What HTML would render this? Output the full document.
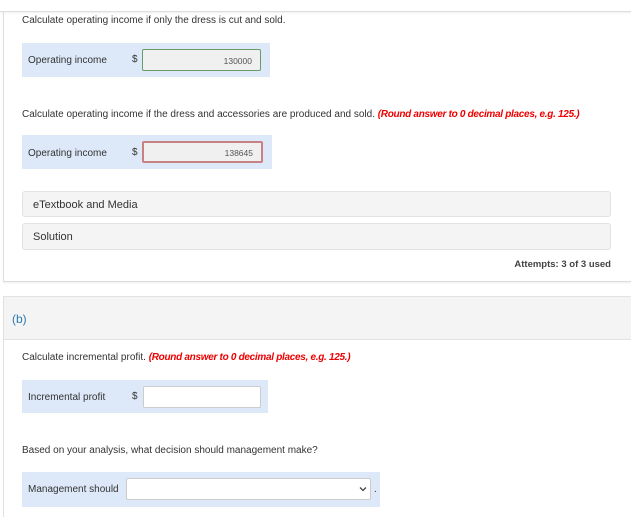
<!DOCTYPE html>
<html><head><style>
body{margin:0;width:631px;height:510px;overflow:hidden;background:#fff;font-family:"Liberation Sans",sans-serif;color:#333;font-size:10px;position:relative}
.a{position:absolute}
.box{position:absolute;background:#dde8f8}
.lbl{position:absolute;font-size:10px;color:#333}
.inp{position:absolute;background:#f0f0f0;border:1px solid #aaa;border-radius:2px;box-sizing:border-box;text-align:right;font-size:8.5px;color:#555;line-height:20px;padding-right:8px}
.red{color:#e00;font-style:italic;font-weight:bold;letter-spacing:-0.3px}
.gr{position:absolute;background:#f4f4f4;border:1px solid #e2e2e2;border-radius:3px;box-sizing:border-box;font-size:11px;padding-left:10px;line-height:26px;color:#333}
</style></head><body>
<div class="a" style="left:0;top:0;width:631px;height:11px;border-bottom:1px solid #ddd;box-shadow:0 1px 2px #eee"></div>
<div class="a" style="left:3px;top:12px;width:640px;height:269px;border-left:1px solid #e0e0e0;border-bottom:1px solid #ddd;box-shadow:0 1px 2px #eee"></div>
<div class="a" style="left:22px;top:15px">Calculate operating income if only the dress is cut and sold.</div>
<div class="box" style="left:22px;top:43px;width:248px;height:34px"></div>
<div class="lbl" style="left:28px;top:55px">Operating income</div>
<div class="lbl" style="left:132px;top:54px">$</div>
<div class="inp" style="left:142px;top:49px;width:119px;height:22px;border:1px solid #6a9a6a;line-height:22px">130000</div>
<div class="a" style="left:22px;top:109px">Calculate operating income if the dress and accessories are produced and sold. <span class="red">(Round answer to 0 decimal places, e.g. 125.)</span></div>
<div class="box" style="left:22px;top:135px;width:250px;height:34px"></div>
<div class="lbl" style="left:28px;top:148px">Operating income</div>
<div class="lbl" style="left:132px;top:147px">$</div>
<div class="inp" style="left:142px;top:141px;width:121px;height:22px;border:2px solid #c98080">138645</div>
<div class="gr" style="left:22px;top:191px;width:589px;height:26px">eTextbook and Media</div>
<div class="gr" style="left:22px;top:223px;width:589px;height:27px">Solution</div>
<div class="a" style="right:20px;top:259px;font-weight:bold;font-size:9.5px;color:#444">Attempts: 3 of 3 used</div>
<div class="a" style="left:3px;top:296px;width:640px;height:220px;border-left:1px solid #e0e0e0;border-top:1px solid #e2e2e2"></div>
<div class="a" style="left:4px;top:297px;width:640px;height:42px;background:#f4f4f4;border-bottom:1px solid #e2e2e2"></div>
<div class="a" style="left:12px;top:312px;font-size:12px;color:#2a7ab0">(b)</div>
<div class="a" style="left:22px;top:352px">Calculate incremental profit. <span class="red">(Round answer to 0 decimal places, e.g. 125.)</span></div>
<div class="box" style="left:22px;top:380px;width:246px;height:33px"></div>
<div class="lbl" style="left:28px;top:392px">Incremental profit</div>
<div class="lbl" style="left:132px;top:391px">$</div>
<div class="inp" style="left:143px;top:386px;width:118px;height:22px;background:#fff;border:1px solid #ccc"></div>
<div class="a" style="left:22px;top:445px">Based on your analysis, what decision should management make?</div>
<div class="box" style="left:22px;top:472px;width:358px;height:35px"></div>
<div class="lbl" style="left:28px;top:484px">Management should</div>
<div class="inp" style="left:126px;top:478px;width:245px;height:22px;background:#fff;border:1px solid #ccc"></div>
<svg class="a" style="left:359px;top:486px" width="8" height="6"><path d="M1 1.5 L4 4.5 L7 1.5" stroke="#444" stroke-width="1.3" fill="none"/></svg>
<div class="a" style="left:374px;top:484px">.</div>
</body></html>
